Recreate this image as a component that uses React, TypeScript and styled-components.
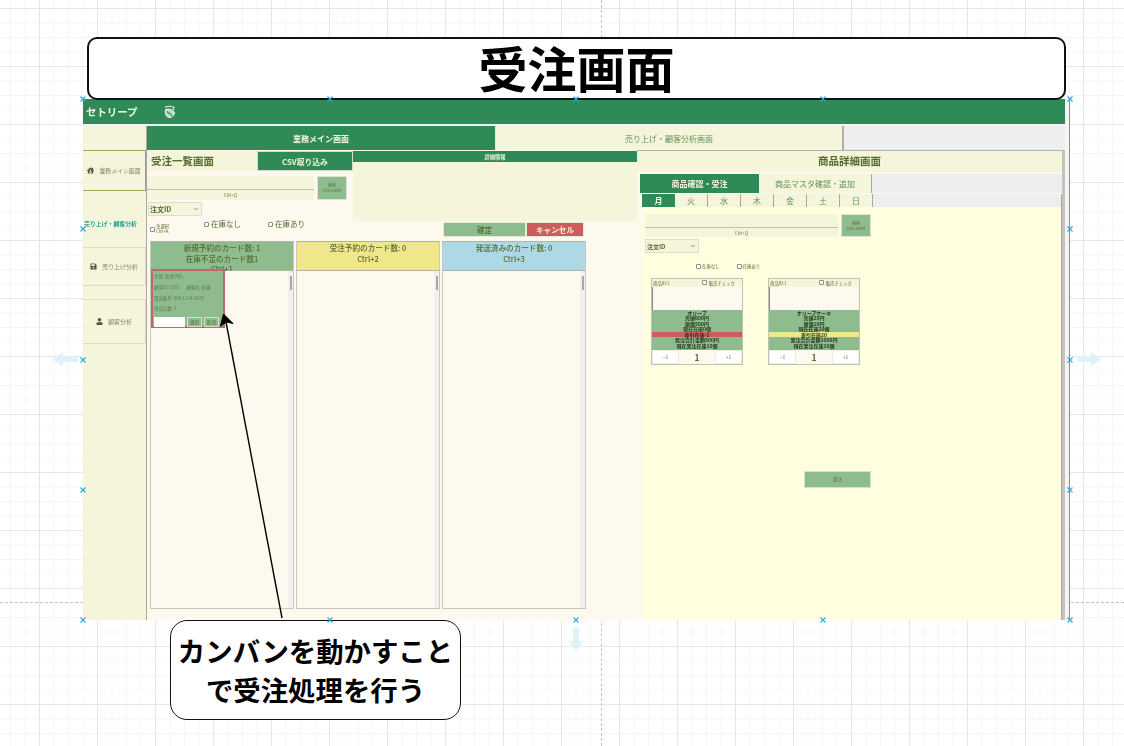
// App.tsx
import React from "react";
import styled, { createGlobalStyle } from "styled-components";
import { FaHouseUser, FaSave, FaUser } from "react-icons/fa";

const GREEN = "#2e8b57";
const SOFT_GREEN = "#8fbc8f";
const BEIGE = "#f5f5dc";
const CREAM = "#fdf9ee";
const OLIVE = "#556b2f";
const RED = "#cd5c5c";
const KHAKI = "#f0e68c";

const GlobalStyle = createGlobalStyle`
  html, body {
    margin: 0;
    padding: 0;
    background: #ffffff;
  }
  * {
    box-sizing: border-box;
  }
  body {
    font-family: "Noto Sans CJK JP", "Noto Sans", sans-serif;
  }
`;

/* ---------- drawing canvas ---------- */

const Canvas = styled.div`
  position: relative;
  width: 1124px;
  height: 746px;
  overflow: hidden;
  background-color: #ffffff;
  background-image:
    linear-gradient(#e6e6e6 1px, transparent 1px),
    linear-gradient(90deg, #e6e6e6 1px, transparent 1px),
    linear-gradient(#f6f6f6 1px, transparent 1px),
    linear-gradient(90deg, #f6f6f6 1px, transparent 1px);
  background-size: 58px 58px, 58px 58px, 14.5px 14.5px, 14.5px 14.5px;
  background-position: 0 8px, 39px 0, 0 8px, 39px 0;
`;

const GuideH = styled.div`
  position: absolute;
  left: 0;
  right: 0;
  top: 602px;
  border-top: 1px dashed #c4c4c4;
`;

const GuideV = styled.div`
  position: absolute;
  top: 0;
  bottom: 0;
  left: 601px;
  border-left: 1px dashed #c4c4c4;
`;

const Frame = styled.div`
  position: absolute;
  left: 83px;
  top: 99px;
  width: 987px;
  height: 521px;
  display: flex;
  flex-direction: column;
  padding-right: 4px;
  background: #f4f4f4;
  border-right: 1px solid #8c8c8c;
  filter: blur(0.45px);
`;

const TitleBox = styled.div`
  position: absolute;
  left: 87px;
  top: 37px;
  width: 979px;
  height: 63px;
  padding-bottom: 4px;
  display: flex;
  align-items: center;
  justify-content: center;
  background: #ffffff;
  border: 2px solid #111111;
  border-radius: 10px;
  font-size: 49px;
  font-weight: 700;
  color: #000000;
`;

const Callout = styled.div`
  position: absolute;
  left: 170px;
  top: 620px;
  width: 291px;
  height: 100px;
  display: flex;
  align-items: center;
  justify-content: center;
  text-align: center;
  background: #ffffff;
  border: 1.5px solid #111111;
  border-radius: 17px;
  font-size: 27.4px;
  line-height: 39px;
  font-weight: 700;
  color: #000000;
`;

const Overlay = styled.svg`
  position: absolute;
  left: 0;
  top: 0;
  pointer-events: none;
`;

const Handle = styled.svg<{ $x: number; $y: number }>`
  position: absolute;
  left: ${(p) => p.$x - 3}px;
  top: ${(p) => p.$y - 3}px;
  width: 6px;
  height: 6px;
`;

/* ---------- app header / side nav ---------- */

const Header = styled.div`
  flex: none;
  height: 25px;
  margin-bottom: 2px;
  display: flex;
  align-items: center;
  gap: 26px;
  padding-left: 3px;
  background: ${GREEN};
  color: #f4f4e4;
  font-size: 10.4px;
  font-weight: 700;
`;

const Body = styled.div`
  flex: 1;
  min-height: 0;
  display: flex;
`;

const SideNav = styled.div`
  flex: none;
  width: 64px;
  display: flex;
  flex-direction: column;
  background: ${BEIGE};
  border-right: 1px solid #a8a8a0;
`;

const NavBox = styled.div<{ $h: number; $mt: number; $active?: boolean }>`
  flex: none;
  height: ${(p) => p.$h}px;
  margin-top: ${(p) => p.$mt}px;
  padding-bottom: 1px;
  display: flex;
  align-items: center;
  justify-content: center;
  gap: 5px;
  font-size: 5.9px;
  color: #85856c;
  border-top: 1px solid ${(p) => (p.$active ? "#a3a35c" : "#dcdcc4")};
  border-bottom: 1px solid ${(p) => (p.$active ? "#a3a35c" : "#dcdcc4")};
  border-right: 1px solid ${(p) => (p.$active ? "#a3a35c" : "#dcdcc4")};
  svg {
    font-size: 7px;
    color: #555544;
  }
`;

const NavLabel = styled.div`
  flex: none;
  height: 29px;
  margin-top: 27px;
  padding: 1px 0 0 1px;
  font-size: 5.9px;
  white-space: nowrap;
  color: #008b8b;
  font-weight: 500;
`;

/* ---------- content ---------- */

const Content = styled.div`
  flex: 1;
  min-width: 0;
  display: flex;
  flex-direction: column;
`;

const TabBar = styled.div`
  flex: none;
  height: 24px;
  display: flex;
  background: #eeeeee;
`;

const PageTab = styled.div<{ $active?: boolean }>`
  width: ${(p) => (p.$active ? 349 : 348)}px;
  display: flex;
  align-items: center;
  justify-content: center;
  font-size: 8px;
  background: ${(p) => (p.$active ? GREEN : BEIGE)};
  color: ${(p) => (p.$active ? "#f5f5dc" : "#5f8f55")};
  font-weight: ${(p) => (p.$active ? 700 : 400)};
  border-right: ${(p) => (p.$active ? "1px solid #e8e8d8" : "2px solid #b0b0a8")};
`;

const Main = styled.div`
  flex: 1;
  min-height: 0;
  display: flex;
`;

const LeftPane = styled.div`
  flex: none;
  width: 490px;
  display: flex;
  flex-direction: column;
  background: ${CREAM};
`;

const TopRow = styled.div`
  flex: none;
  height: 71px;
  display: flex;
`;

const ListHead = styled.div`
  flex: none;
  width: 206px;
  padding-top: 1px;
`;

const TitleRow = styled.div`
  height: 20px;
  display: flex;
  background: ${BEIGE};
`;

const PaneTitle = styled.div`
  flex: 1;
  padding-left: 4px;
  font-size: 10.5px;
  line-height: 19px;
  font-weight: 700;
  color: ${OLIVE};
`;

const CsvButton = styled.div`
  flex: none;
  width: 96px;
  display: flex;
  align-items: center;
  justify-content: center;
  background: ${GREEN};
  border: 1px solid #dcdcc4;
  color: #f5f5dc;
  font-size: 7.8px;
  font-weight: 700;
`;

const SearchRow = styled.div<{ $w: number; $mt: number }>`
  display: flex;
  width: ${(p) => p.$w + 33}px;
  margin-top: ${(p) => p.$mt}px;
  height: ${(p) => (p.$w > 180 ? 23 : 24)}px;
`;

const SearchInput = styled.div`
  flex: 1;
  display: flex;
  flex-direction: column;
  background: ${BEIGE};
  font-size: 4.6px;
  color: #6b7d4f;
  text-align: center;
`;

const SearchLine = styled.div`
  flex: none;
  height: 14px;
  border-bottom: 1px solid #c0c0b8;
  margin-bottom: 2px;
`;

const SearchButton = styled.div`
  flex: none;
  width: 30px;
  margin-left: 3px;
  display: flex;
  flex-direction: column;
  align-items: center;
  justify-content: center;
  background: ${SOFT_GREEN};
  border: 1px solid #e0e0d4;
  font-size: 4px;
  line-height: 5px;
  color: ${OLIVE};
`;

const SelectBox = styled.div<{ $flush?: boolean }>`
  width: 54px;
  height: 14px;
  margin: 2px 0 0 ${(p) => (p.$flush ? 0 : 1)}px;
  display: flex;
  align-items: center;
  justify-content: space-between;
  padding: 0 2px 0 1px;
  background: ${BEIGE};
  border: 1px solid #dcdcd4;
  color: ${OLIVE};
  font-size: ${(p) => (p.$flush ? 6 : 7)}px;
  font-weight: 700;
`;

const SelectArrow = styled.svg`
  flex: none;
  width: 6px;
  height: 4px;
`;

const DetailPanel = styled.div`
  flex: none;
  width: 284px;
  margin-top: 1px;
  display: flex;
  flex-direction: column;
  background: ${BEIGE};
`;

const DetailHead = styled.div`
  flex: none;
  height: 11px;
  background: ${GREEN};
  color: #f5f5dc;
  font-size: 5.2px;
  line-height: 11px;
  font-weight: 700;
  text-align: center;
`;

const ActionRow = styled.div`
  flex: none;
  height: 20px;
  display: grid;
  grid-template-columns: 54px 64px 175px 83px 58px;
  padding-left: 3px;
  align-items: center;
`;

const CheckLabel = styled.label<{ $size?: number; $lift?: number }>`
  display: flex;
  align-items: center;
  gap: ${(p) => ((p.$size ?? 7.5) > 5 ? 2 : 1)}px;
  margin-bottom: ${(p) => p.$lift ?? 0}px;
  font-size: ${(p) => p.$size ?? 7.5}px;
  line-height: 5.5px;
  color: ${OLIVE};
  white-space: nowrap;
`;

const CheckMark = styled.span`
  flex: none;
  width: 5px;
  height: 5px;
  border: 1px solid #8c8c8c;
  border-radius: 1px;
  background: #ffffff;
`;

const ActionButton = styled.div<{ $danger?: boolean }>`
  height: 15px;
  margin-bottom: 3px;
  display: flex;
  align-items: center;
  justify-content: center;
  background: ${(p) => (p.$danger ? RED : SOFT_GREEN)};
  border: 1px solid #e8e8dc;
  color: ${(p) => (p.$danger ? "#f5f5dc" : OLIVE)};
  font-size: 7.6px;
  font-weight: ${(p) => (p.$danger ? 700 : 500)};
`;

const Kanban = styled.div`
  flex: none;
  display: flex;
  gap: 2px;
  padding-left: 3px;
  height: 368px;
`;

const KanbanColumn = styled.div`
  flex: none;
  width: 144px;
  display: flex;
  flex-direction: column;
  border: 1px solid #c8c8bc;
  border-top: none;
`;

const KanbanHead = styled.div<{ $color: string }>`
  flex: none;
  height: 30px;
  padding-top: 1px;
  background: ${(p) => p.$color};
  border-top: 1px solid #b4b4a4;
  border-bottom: 1px solid #b4b4a4;
  color: ${OLIVE};
  font-size: 7.6px;
  line-height: 10.7px;
  text-align: center;
  font-weight: 500;
`;

const KanbanBody = styled.div`
  flex: 1;
  min-height: 0;
  display: flex;
  align-items: flex-start;
  justify-content: space-between;
  background: ${CREAM};
`;

const ScrollTrack = styled.div`
  flex: none;
  align-self: stretch;
  width: 5px;
  padding: 5px 1px 0 2px;
  background: #f0f0f0;
`;

const ScrollThumb = styled.div`
  height: 14px;
  background: #a6a6a6;
`;

const OrderCard = styled.div`
  position: relative;
  z-index: 1;
  flex: none;
  width: 74px;
  height: 59px;
  margin: -2px 0 0 0;
  padding: 2px 1px 0 1px;
  background: ${SOFT_GREEN};
  border: 2px solid #c1666a;
  display: flex;
  flex-direction: column;
  color: #5f7a4a;
  font-size: 4.4px;
`;

const OrderLine = styled.div`
  flex: none;
  height: 10.8px;
  display: flex;
  gap: 7px;
  white-space: nowrap;
`;

const OrderFoot = styled.div`
  flex: none;
  margin-top: 1px;
  height: 10px;
  display: flex;
  gap: 2px;
`;

const OrderInput = styled.div`
  width: 31px;
  background: #ffffff;
`;

const OrderButton = styled.div`
  width: 15px;
  display: flex;
  align-items: center;
  justify-content: center;
  background: ${SOFT_GREEN};
  border: 1px solid #dcdcd0;
  color: ${OLIVE};
`;

/* ---------- product pane ---------- */

const RightPane = styled.div`
  flex: 1;
  min-width: 0;
  display: flex;
  flex-direction: column;
  background: ${CREAM};
  border-top: 1px solid #b4b4a8;
  border-right: 3px solid #c4c4bc;
`;

const RightTitle = styled.div`
  flex: none;
  height: 21px;
  background: ${BEIGE};
  color: ${OLIVE};
  font-size: 10.5px;
  line-height: 20px;
  font-weight: 700;
  text-align: center;
`;

const SubTabs = styled.div`
  flex: none;
  height: 19px;
  margin: 2px 0 0 3px;
  display: flex;
  background: #eeeeee;
`;

const SubTab = styled.div<{ $active?: boolean }>`
  width: ${(p) => (p.$active ? 119 : 113)}px;
  display: flex;
  align-items: center;
  justify-content: center;
  font-size: 8px;
  font-weight: ${(p) => (p.$active ? 700 : 400)};
  background: ${(p) => (p.$active ? GREEN : BEIGE)};
  color: ${(p) => (p.$active ? "#f5f5dc" : "#5f8f55")};
  border-right: ${(p) => (p.$active ? "none" : "1px solid #a8a8a0")};
`;

const PaneBody = styled.div`
  flex: 1;
  min-height: 0;
  margin: 1px 0 0 5px;
  display: flex;
`;

const PaneScroll = styled.div`
  flex: none;
  width: 1px;
  background: #a8a8a0;
`;

const PaneInner = styled.div`
  flex: 1;
  min-width: 0;
  display: flex;
  flex-direction: column;
`;

const DayTabs = styled.div`
  flex: none;
  height: 13px;
  display: flex;
  background: #eeeeee;
`;

const DayTab = styled.div<{ $active?: boolean }>`
  width: 33px;
  display: flex;
  align-items: center;
  justify-content: center;
  font-size: 8px;
  font-weight: ${(p) => (p.$active ? 700 : 400)};
  background: ${(p) => (p.$active ? GREEN : BEIGE)};
  color: ${(p) => (p.$active ? "#f5f5dc" : "#5f8f55")};
  border-right: ${(p) => (p.$active ? "none" : "1px solid #a8a8a0")};
`;

const ProductArea = styled.div`
  flex: 1;
  min-height: 0;
  padding: 7px 0 0 3px;
  background: #ffffe0;
`;

const FilterRow = styled.div`
  margin: 11px 0 0 51px;
  display: flex;
  gap: 17px;
`;

const ProductRow = styled.div`
  margin: 8px 0 0 6px;
  display: flex;
  gap: 25px;
`;

const ProductCard = styled.div`
  flex: none;
  width: 92px;
  height: 87px;
  display: flex;
  flex-direction: column;
  border: 1px solid #c0c0b4;
  background: ${SOFT_GREEN};
`;

const ProductTop = styled.div`
  flex: none;
  height: 8px;
  display: flex;
  align-items: center;
  justify-content: space-between;
  padding: 0 1px;
  background: ${BEIGE};
  color: ${OLIVE};
  font-size: 4.4px;
`;

const ProductCheck = styled.span`
  display: flex;
  align-items: center;
  gap: 2px;
  padding-right: 6px;
`;

const ProductImage = styled.div`
  flex: none;
  height: 23px;
  background: ${CREAM};
  border-left: 1px solid #8c8c8c;
`;

const ProductRowLine = styled.div<{ $bg?: string }>`
  flex: none;
  height: 5.6px;
  line-height: 5.6px;
  font-size: 5px;
  font-weight: 700;
  text-align: center;
  white-space: nowrap;
  color: #26351a;
  background: ${(p) => p.$bg ?? "transparent"};
`;

const Stepper = styled.div`
  flex: 1;
  display: flex;
  background: ${CREAM};
  margin-top: 1px;
  color: ${OLIVE};
`;

const StepButton = styled.div`
  width: 27px;
  display: flex;
  align-items: center;
  justify-content: center;
  background: #ffffff;
  border: 1px solid #ecece4;
  font-size: 5px;
`;

const StepValue = styled.div`
  flex: 1;
  display: flex;
  align-items: center;
  justify-content: center;
  font-size: 8.5px;
  font-weight: 700;
`;

const SubmitButton = styled.div`
  width: 67px;
  height: 17px;
  margin: 106px 0 0 159px;
  display: flex;
  align-items: center;
  justify-content: center;
  background: ${SOFT_GREEN};
  border: 1px solid #dcdcd0;
  color: ${OLIVE};
  font-size: 4.4px;
`;

const handles = [
  [83, 99], [330, 99], [576, 99], [823, 99], [1070, 99],
  [83, 229], [1070, 229], [83, 360], [1070, 360], [83, 490], [1070, 490],
  [83, 620], [330, 620], [576, 620], [823, 620], [1070, 620],
];

const days = ["月", "火", "水", "木", "金", "土", "日"];

const products = [
  {
    name: "オリーブ",
    price: "売値600円",
    cost: "原価500円",
    stock: "現在在庫0個",
    diff: "差引在庫-1",
    diffColor: RED,
    total: "発注合計金額500円",
  },
  {
    name: "オリーブケーキ",
    price: "売値20円",
    cost: "原価10円",
    stock: "現在在庫20個",
    diff: "差引在庫20",
    diffColor: KHAKI,
    total: "発注合計金額1000円",
  },
];

const Logo = () => (
  <svg width="13" height="14" viewBox="0 0 13 14" fill="none" stroke="#e8f2e6" strokeWidth="1.1">
    <path d="M2 2.5 C5 0.5 9 1 11 2.5 C9.5 3.2 10.5 4 11 5" />
    <path d="M2.5 5 C5.5 3.2 10 4.5 11.5 8 C10.8 11 8 13 5.5 12.2 C3 11 1.6 8 2.5 5 Z" fill="#b9d9c4" />
    <path d="M4 6.5 C6 8 8 9.5 9.5 11.5" stroke={GREEN} />
  </svg>
);

const Caret = () => (
  <SelectArrow viewBox="0 0 6 4" fill="none" stroke="#8c8c8c" strokeWidth="0.8">
    <path d="M1 1 L3 3 L5 1" />
  </SelectArrow>
);

const App: React.FC = () => {
  return (
    <Canvas>
      <GlobalStyle />
      <GuideH />
      <GuideV />

      <Frame>
        <Header>
          <span>セトリープ</span>
          <Logo />
        </Header>
        <Body>
          <SideNav>
            <NavBox $h={41} $mt={24} $active>
              <FaHouseUser />
              業務メイン画面
            </NavBox>
            <NavLabel>売り上げ・顧客分析</NavLabel>
            <NavBox $h={39} $mt={0}>
              <FaSave />
              売り上げ分析
            </NavBox>
            <NavBox $h={45} $mt={13}>
              <FaUser />
              顧客分析
            </NavBox>
          </SideNav>

          <Content>
            <TabBar>
              <PageTab $active>業務メイン画面</PageTab>
              <PageTab>売り上げ・顧客分析画面</PageTab>
            </TabBar>
            <Main>
              <LeftPane>
                <TopRow>
                  <ListHead>
                    <TitleRow>
                      <PaneTitle>受注一覧画面</PaneTitle>
                      <CsvButton>CSV取り込み</CsvButton>
                    </TitleRow>
                    <SearchRow $w={167} $mt={5}>
                      <SearchInput>
                        <SearchLine />
                        Ctrl+Q
                      </SearchInput>
                      <SearchButton>
                        <span>検索</span>
                        <span>Ctrl+Enter</span>
                      </SearchButton>
                    </SearchRow>
                    <SelectBox>
                      注文ID
                      <Caret />
                    </SelectBox>
                  </ListHead>
                  <DetailPanel>
                    <DetailHead>詳細情報</DetailHead>
                  </DetailPanel>
                </TopRow>

                <ActionRow>
                  <CheckLabel $size={4.4} $lift={4}>
                    <CheckMark />
                    <span>
                      全選択
                      <br />
                      Ctrl+A
                    </span>
                  </CheckLabel>
                  <CheckLabel $lift={14}>
                    <CheckMark />
                    在庫なし
                  </CheckLabel>
                  <CheckLabel $lift={14}>
                    <CheckMark />
                    在庫あり
                  </CheckLabel>
                  <ActionButton>確定</ActionButton>
                  <ActionButton $danger>キャンセル</ActionButton>
                </ActionRow>

                <Kanban>
                  <KanbanColumn>
                    <KanbanHead $color={SOFT_GREEN}>
                      新規予約のカード数: 1
                      <br />
                      在庫不足のカード数1
                      <br />
                      Ctrl+1
                    </KanbanHead>
                    <KanbanBody>
                      <OrderCard>
                        <OrderLine>状態: 新規予約</OrderLine>
                        <OrderLine>
                          <span>顧客ID: C001</span>
                          <span>顧客名: 佐藤</span>
                        </OrderLine>
                        <OrderLine>電話番号: 090-1234-5678</OrderLine>
                        <OrderLine>商品点数: 3</OrderLine>
                        <OrderFoot>
                          <OrderInput />
                          <OrderButton>適用</OrderButton>
                          <OrderButton>取消</OrderButton>
                        </OrderFoot>
                      </OrderCard>
                      <ScrollTrack>
                        <ScrollThumb />
                      </ScrollTrack>
                    </KanbanBody>
                  </KanbanColumn>
                  <KanbanColumn>
                    <KanbanHead $color={KHAKI}>
                      受注予約のカード数: 0
                      <br />
                      Ctrl+2
                    </KanbanHead>
                    <KanbanBody>
                      <span />
                      <ScrollTrack>
                        <ScrollThumb />
                      </ScrollTrack>
                    </KanbanBody>
                  </KanbanColumn>
                  <KanbanColumn>
                    <KanbanHead $color="#add8e6">
                      発送済みのカード数: 0
                      <br />
                      Ctrl+3
                    </KanbanHead>
                    <KanbanBody>
                      <span />
                      <ScrollTrack>
                        <ScrollThumb />
                      </ScrollTrack>
                    </KanbanBody>
                  </KanbanColumn>
                </Kanban>
              </LeftPane>

              <RightPane>
                <RightTitle>商品詳細画面</RightTitle>
                <SubTabs>
                  <SubTab $active>商品確認・受注</SubTab>
                  <SubTab>商品マスタ確認・追加</SubTab>
                </SubTabs>
                <PaneBody>
                  <PaneInner>
                    <DayTabs>
                      {days.map((d, i) => (
                        <DayTab key={d} $active={i === 0}>
                          {d}
                        </DayTab>
                      ))}
                    </DayTabs>
                    <ProductArea>
                      <SearchRow $w={193} $mt={0}>
                        <SearchInput>
                          <SearchLine />
                          Ctrl+Q
                        </SearchInput>
                        <SearchButton>
                          <span>検索</span>
                          <span>Ctrl+Enter</span>
                        </SearchButton>
                      </SearchRow>
                      <SelectBox $flush>
                        注文ID
                        <Caret />
                      </SelectBox>
                      <FilterRow>
                        <CheckLabel $size={4.4}>
                          <CheckMark />
                          在庫なし
                        </CheckLabel>
                        <CheckLabel $size={4.4}>
                          <CheckMark />
                          在庫あり
                        </CheckLabel>
                      </FilterRow>
                      <ProductRow>
                        {products.map((p) => (
                          <ProductCard key={p.name}>
                            <ProductTop>
                              <span>商品ID:1</span>
                              <ProductCheck>
                                <CheckMark />
                                販売チェック
                              </ProductCheck>
                            </ProductTop>
                            <ProductImage />
                            <ProductRowLine>{p.name}</ProductRowLine>
                            <ProductRowLine>{p.price}</ProductRowLine>
                            <ProductRowLine>{p.cost}</ProductRowLine>
                            <ProductRowLine>{p.stock}</ProductRowLine>
                            <ProductRowLine $bg={p.diffColor}>{p.diff}</ProductRowLine>
                            <ProductRowLine>{p.total}</ProductRowLine>
                            <ProductRowLine>現在発注在庫10個</ProductRowLine>
                            <Stepper>
                              <StepButton>−1</StepButton>
                              <StepValue>1</StepValue>
                              <StepButton>+1</StepButton>
                            </Stepper>
                          </ProductCard>
                        ))}
                      </ProductRow>
                      <SubmitButton>発注</SubmitButton>
                    </ProductArea>
                  </PaneInner>
                  <PaneScroll />
                </PaneBody>
              </RightPane>
            </Main>
          </Content>
        </Body>
      </Frame>

      <TitleBox>受注画面</TitleBox>
      <Callout>
        カンバンを動かすこと
        <br />
        で受注処理を行う
      </Callout>

      <Overlay width="1124" height="746" viewBox="0 0 1124 746">
        <path d="M282 618 L226 322" stroke="#000000" strokeWidth="1.4" fill="none" />
        <path d="M223.5 314 L233 323.5 L226.5 322 L220.5 326 Z" fill="#000000" stroke="#000000" strokeWidth="1" />
        <path d="M78 356 H63 V352 L52 359 L63 366 V362 H78 Z" fill="#dff2fc" />
        <path d="M1078 356 H1091 V352 L1101 359 L1091 366 V362 H1078 Z" fill="#dff2fc" />
        <path d="M573 628 H579 V641 H583 L576 651 L569 641 H573 Z" fill="#dff2fc" />
      </Overlay>

      {handles.map(([x, y]) => (
        <Handle key={`${x}-${y}`} $x={x} $y={y} viewBox="0 0 6 6" stroke="#29a8e0" strokeWidth="1.1">
          <path d="M0.5 0.5 L5.5 5.5 M5.5 0.5 L0.5 5.5" />
        </Handle>
      ))}
    </Canvas>
  );
};

export default App;
